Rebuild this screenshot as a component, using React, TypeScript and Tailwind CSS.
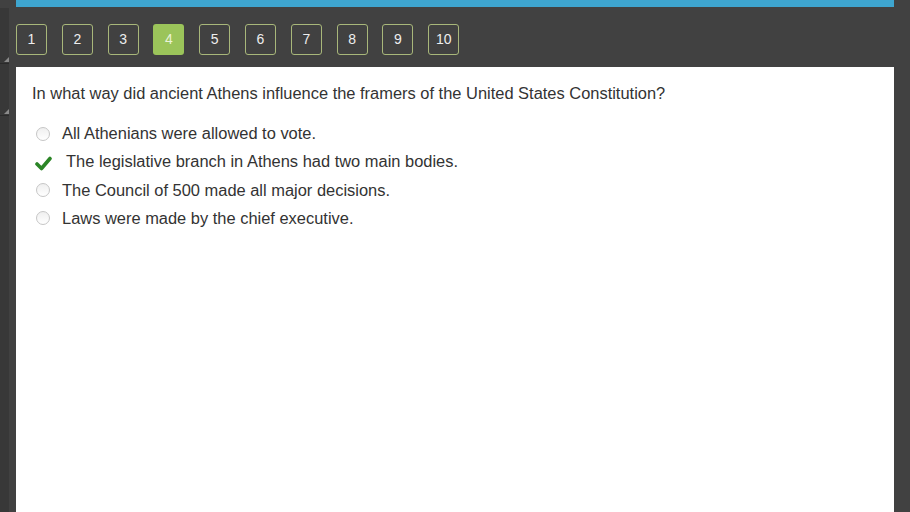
import React from "react";

const options = [
  { text: "All Athenians were allowed to vote.", correct: false },
  { text: "The legislative branch in Athens had two main bodies.", correct: true },
  { text: "The Council of 500 made all major decisions.", correct: false },
  { text: "Laws were made by the chief executive.", correct: false },
];

const pages = [1, 2, 3, 4, 5, 6, 7, 8, 9, 10];

export default function App() {
  return (
    <div
      className="relative w-[910px] h-[512px] overflow-hidden bg-[#414141] flex"
      style={{ fontFamily: '"Liberation Sans", Arial, sans-serif' }}
    >
      {/* left tool strip */}
      <div className="w-[16px] shrink-0 flex flex-col">
        <div className="h-[8px]" />
        <div className="h-[56px] w-[9px] bg-[#383838] border-b border-[#2a2a2a] relative">
          <span className="absolute right-0 bottom-[1px] w-0 h-0 border-l-[5px] border-l-transparent border-b-[5px] border-b-[#8a8a8a]" />
        </div>
        <div className="h-[52px] w-[9px] bg-[#383838] border-b border-[#2a2a2a] relative">
          <span className="absolute right-0 bottom-[1px] w-0 h-0 border-l-[5px] border-l-transparent border-b-[5px] border-b-[#8a8a8a]" />
        </div>
        <div className="flex-1 w-[9px] bg-[#383838]" />
      </div>

      <div className="w-[878px] shrink-0 flex flex-col">
        <div className="h-[7px] bg-[#3ea5cf]" />

        {/* question nav */}
        <div className="h-[60px] flex items-start pt-[17px] gap-[14.8px]">
          {pages.map((p) =>
            p === 4 ? (
              <div
                key={p}
                className="w-[31px] h-[31px] rounded-[3px] bg-[#9bc45a] text-[#e9f3d8] text-[14px] flex items-center justify-center"
              >
                {p}
              </div>
            ) : (
              <div
                key={p}
                className="w-[31px] h-[31px] rounded-[3px] border border-[#a8b77a] text-[#eeeeee] text-[14px] flex items-center justify-center"
              >
                {p}
              </div>
            )
          )}
        </div>

        {/* question panel */}
        <div className="flex-1 bg-white pl-[16px] pt-[16px]">
          <p className="text-[16.45px] text-[#333333] leading-[20px]">
            In what way did ancient Athens influence the framers of the United States Constitution?
          </p>
          <div className="mt-[20.5px] flex flex-col gap-[8.2px]">
            {options.map((o) => (
              <div key={o.text} className="flex items-center h-[20px] text-[16.45px] text-[#333333]">
                <div className="w-[30px] pl-[4px] flex items-center">
                  {o.correct ? (
                    <svg width="17" height="15" viewBox="0 0 17 15" className="ml-[-1px] mt-[3px]">
                      <path d="M2 8 L6.5 12.5 L15 2.5" fill="none" stroke="#2b8526" strokeWidth="3.6" strokeLinecap="round" strokeLinejoin="round" />
                    </svg>
                  ) : (
                    <span className="block w-[14px] h-[14px] rounded-full border border-[#c6c6c6] bg-gradient-to-b from-[#efefef] to-[#ffffff]" />
                  )}
                </div>
                <span className={o.correct ? "pl-[4px]" : ""}>{o.text}</span>
              </div>
            ))}
          </div>
        </div>
      </div>
      <div className="flex-1" />
    </div>
  );
}
